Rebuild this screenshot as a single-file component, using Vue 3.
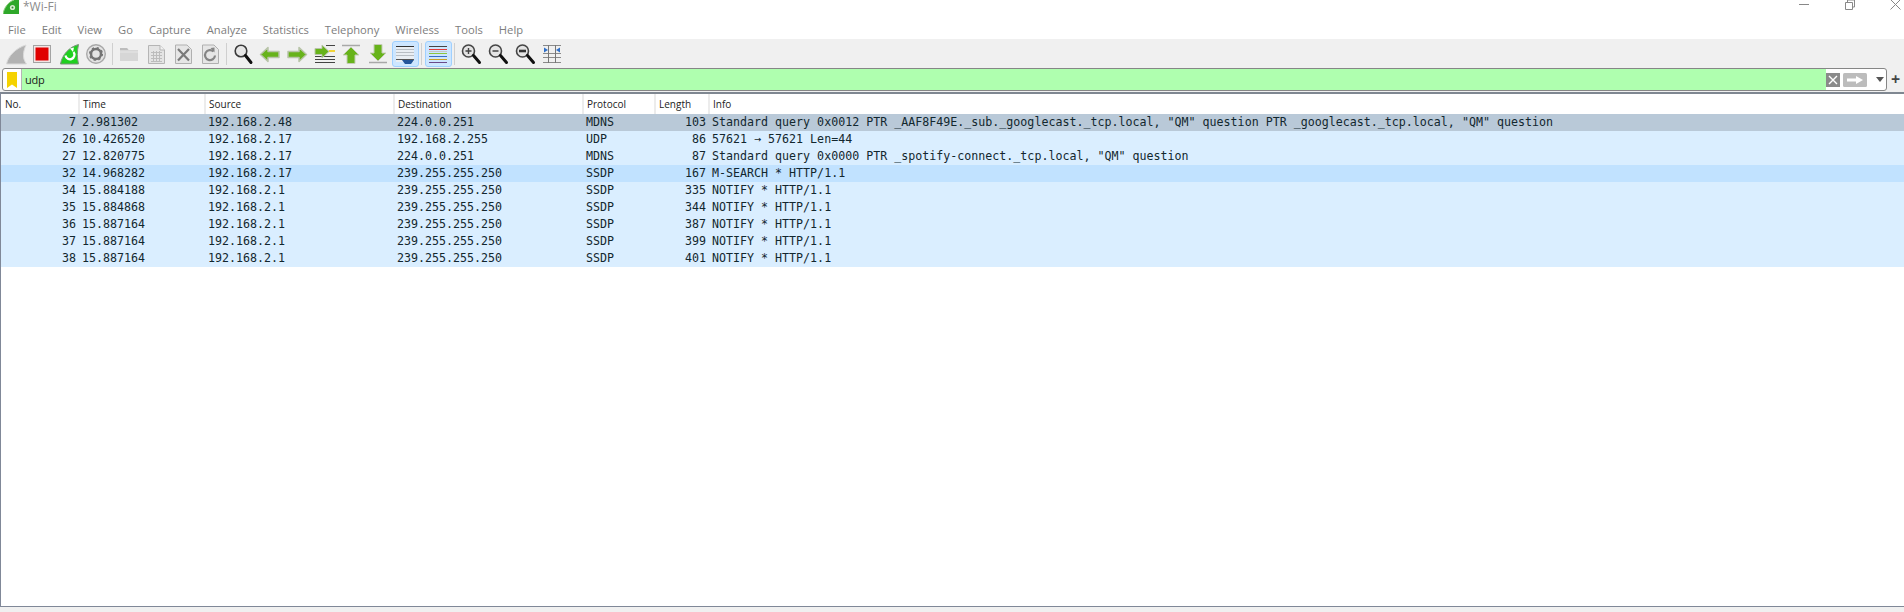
<script setup>
const menus = ['File','Edit','View','Go','Capture','Analyze','Statistics','Telephony','Wireless','Tools','Help']
const cols = [
  { name: 'No.', w: 79 },
  { name: 'Time', w: 126 },
  { name: 'Source', w: 189 },
  { name: 'Destination', w: 189 },
  { name: 'Protocol', w: 72 },
  { name: 'Length', w: 54 },
  { name: 'Info', w: 0 }
]
const rows = [
  ['7','2.981302','192.168.2.48','224.0.0.251','MDNS','103','Standard query 0x0012 PTR _AAF8F49E._sub._googlecast._tcp.local, "QM" question PTR _googlecast._tcp.local, "QM" question','sel'],
  ['26','10.426520','192.168.2.17','192.168.2.255','UDP','86','57621 → 57621 Len=44',''],
  ['27','12.820775','192.168.2.17','224.0.0.251','MDNS','87','Standard query 0x0000 PTR _spotify-connect._tcp.local, "QM" question',''],
  ['32','14.968282','192.168.2.17','239.255.255.250','SSDP','167','M-SEARCH * HTTP/1.1','hi'],
  ['34','15.884188','192.168.2.1','239.255.255.250','SSDP','335','NOTIFY * HTTP/1.1',''],
  ['35','15.884868','192.168.2.1','239.255.255.250','SSDP','344','NOTIFY * HTTP/1.1',''],
  ['36','15.887164','192.168.2.1','239.255.255.250','SSDP','387','NOTIFY * HTTP/1.1',''],
  ['37','15.887164','192.168.2.1','239.255.255.250','SSDP','399','NOTIFY * HTTP/1.1',''],
  ['38','15.887164','192.168.2.1','239.255.255.250','SSDP','401','NOTIFY * HTTP/1.1','']
]
</script>

<template>
  <div class="app">
    <div class="title">
      <svg class="logo" width="16" height="14" viewBox="0 0 16 14"><path d="M0 14C1 8 5 2 11 0H16V14Z" fill="#2fa82a"/><path d="M0 14C1 8 5 2 11 0" fill="none" stroke="#8fcf7f"/><circle cx="9.500" cy="7.500" r="2.600" fill="#d8ecd0"/><circle cx="9.500" cy="7.500" r="1" fill="#3a8a34"/></svg>
      <span class="tname">*Wi-Fi</span>
      <div class="winbtns">
        <svg width="12" height="12" viewBox="0 0 12 12"><path d="M1 5.500H11" stroke="#888" fill="none"/></svg>
        <svg width="12" height="12" viewBox="0 0 12 12"><path d="M1.500 3.500H8.500V10.500H1.500ZM3.500 3V1H10.500V8H9" stroke="#888" fill="none"/></svg>
        <svg width="12" height="12" viewBox="0 0 12 12"><path d="M0.500 0.500L10.500 10.500M10.500 0.500L0.500 10.500" stroke="#888" fill="none"/></svg>
      </div>
    </div>
    <div class="menu"><span v-for="m in menus" :key="m">{{ m }}</span></div>
    <div class="toolbar">
      <div class="tb"><svg viewBox="0 0 24 24"><path d="M3.500 22C5 14 13 6 23 3C20 10 19 16 23.500 22Z" fill="#b2b2b2" stroke="#dadada"/></svg></div>
      <div class="tb"><svg viewBox="0 0 24 24"><rect x="3.500" y="3.500" width="17" height="17" fill="#f3e4e4" stroke="#a3a3a3"/><rect x="5.500" y="5.500" width="13" height="13" fill="#e00000"/></svg></div>
      <div class="tb"><svg viewBox="0 0 24 24"><path d="M3.500 22C5 13 12 5 21.500 2.500C20 9 20 16 21.500 22Z" fill="#1fd01f" stroke="#7d927d"/><path d="M8.500 13.500A4.500 4.500 0 1 0 16.500 10" fill="none" stroke="#fff" stroke-width="2.200"/><path d="M13 6.500L17 5.500L16 10Z" fill="#fff"/></svg></div>
      <div class="tb"><svg viewBox="0 0 24 24"><circle cx="12" cy="12" r="9.300" fill="#e4e4e4" stroke="#a8a8a8" stroke-width="1.400"/><circle cx="12" cy="12" r="5" fill="none" stroke="#747474" stroke-width="2.500"/><circle cx="12" cy="12" r="6.300" fill="none" stroke="#747474" stroke-width="1.500" stroke-dasharray="2.200 2.750"/></svg></div>
      <div class="sep"></div>
      <div class="tb"><svg viewBox="0 0 24 24"><path d="M3 6H10L11.500 8H21V19H3Z" fill="#d6d6d6"/><path d="M3 6H10L11.500 8H3Z" fill="#bdbdbd"/><path d="M3 10H21" stroke="#e6e6e6"/></svg></div>
      <div class="tb"><svg viewBox="0 0 24 24"><path d="M4.500 3.500H16L20.500 8V21.500H4.500Z" fill="#e4e4e4" stroke="#b5b5b5"/><path d="M16 3.500V8H20.500" fill="#f2f2f2" stroke="#b5b5b5"/><path d="M7 10.500H18M7 13.500H18M7 16.500H18M7 19.500H18M9.500 9V20M12.500 9V20M15.500 9V20" stroke="#bcbcbc" fill="none"/></svg></div>
      <div class="tb"><svg viewBox="0 0 24 24"><path d="M4.500 3H16L20.500 7.500V21.500H4.500Z" fill="#e6e6e6" stroke="#b0b0b0"/><path d="M7 7L18 18.500M18 7L7 18.500" stroke="#7a7a7a" stroke-width="2.200"/></svg></div>
      <div class="tb"><svg viewBox="0 0 24 24"><path d="M4.500 3H16L20.500 7.500V21.500H4.500Z" fill="#e6e6e6" stroke="#b0b0b0"/><path d="M15.500 9.500A5 5 0 1 0 17 13.500" fill="none" stroke="#858585" stroke-width="2.200"/><path d="M12.500 6L16.500 5.500L16.500 10.500Z" fill="#858585"/></svg></div>
      <div class="sep"></div>
      <div class="tb"><svg viewBox="0 0 24 24"><circle cx="10" cy="9" r="5.800" fill="#e6e6e6" stroke="#3a3a3a" stroke-width="1.600"/><path d="M14.500 13.500L20 20.500" stroke="#111" stroke-width="3" stroke-linecap="round"/></svg></div>
      <div class="tb"><svg viewBox="0 0 24 24"><path d="M2.500 12.500L10 5.500V9.500H21V15.500H10V19.500Z" fill="#67b31a" stroke="#b8c4a8" stroke-width="1.500" stroke-linejoin="round"/></svg></div>
      <div class="tb"><svg viewBox="0 0 24 24"><path d="M21.500 12.500L14 5.500V9.500H3V15.500H14V19.500Z" fill="#67b31a" stroke="#b8c4a8" stroke-width="1.500" stroke-linejoin="round"/></svg></div>
      <div class="tb"><svg viewBox="0 0 24 24"><path d="M14 3.500H23M3 14.500H23M3 17.500H23M3 20.500H23" stroke="#444" fill="none"/><path d="M17 9H23" stroke="#f2d43a" stroke-width="2"/><path d="M17 9.500L10 3V6.500H3V12.500H10V16Z" fill="#67b31a" stroke="#b8c4a8" stroke-linejoin="round"/></svg></div>
      <div class="tb"><svg viewBox="0 0 24 24"><path d="M3 3.500H21" stroke="#a8a8a8" stroke-width="1.500"/><path d="M12 5L20 13H16V21.500H8V13H4Z" fill="#67b31a" stroke="#c4ccb6" stroke-linejoin="round"/></svg></div>
      <div class="tb"><svg viewBox="0 0 24 24"><path d="M3 20.500H21" stroke="#a8a8a8" stroke-width="1.500"/><path d="M12 19L20 11H16V2.500H8V11H4Z" fill="#67b31a" stroke="#c4ccb6" stroke-linejoin="round"/></svg></div>
      <div class="tb on"><svg viewBox="0 0 24 24"><rect x="3" y="4" width="18" height="16" fill="#e9eef3"/><path d="M3 4.500H21" stroke="#333"/><path d="M3 7.500H21M3 10.500H21M3 13.500H21" stroke="#b8bec4"/><path d="M3 17.500H21" stroke="#555"/><path d="M9 18H21L18 22H12Z" fill="#24569a"/></svg></div>
      <div class="sep"></div>
      <div class="tb on"><svg viewBox="0 0 24 24"><path d="M3 4.500H21" stroke="#444"/><path d="M3 7.500H21" stroke="#e03b3b"/><path d="M3 9.500H21" stroke="#c8c8c8"/><path d="M3 11.500H21" stroke="#8cc63f"/><path d="M3 14.500H21" stroke="#3a6fc4"/><path d="M3 17.500H21" stroke="#c9a227"/><path d="M3 20.500H21" stroke="#6a4a8a"/></svg></div>
      <div class="sep"></div>
      <div class="tb"><svg viewBox="0 0 24 24"><circle cx="9.500" cy="9" r="6" fill="#e4e4e4" stroke="#454545" stroke-width="1.600"/><path d="M6.500 9H12.500M9.500 6V12" stroke="#444" stroke-width="1.400"/><path d="M14.500 13.500L20.500 20.500" stroke="#111" stroke-width="3" stroke-linecap="round"/></svg></div>
      <div class="tb"><svg viewBox="0 0 24 24"><circle cx="9.500" cy="9" r="6" fill="#e4e4e4" stroke="#454545" stroke-width="1.600"/><path d="M6.500 9H12.500" stroke="#444" stroke-width="1.500"/><path d="M14.500 13.500L20.500 20.500" stroke="#111" stroke-width="3" stroke-linecap="round"/></svg></div>
      <div class="tb"><svg viewBox="0 0 24 24"><circle cx="9.500" cy="9" r="6" fill="#e4e4e4" stroke="#454545" stroke-width="1.600"/><path d="M6 9H13" stroke="#333" stroke-width="2.600"/><path d="M14.500 13.500L20.500 20.500" stroke="#111" stroke-width="3" stroke-linecap="round"/></svg></div>
      <div class="tb"><svg viewBox="0 0 24 24"><path d="M3 3.500H21M3 20.500H21M3 11.500H21M3 15.500H21" stroke="#8a8a8a" fill="none"/><path d="M8.500 3V21M15.500 3V21" stroke="#777" fill="none"/><path d="M4 5.500L8 8L4 10.500Z" fill="#2f6fc8"/><path d="M20 5.500L16 8L20 10.500Z" fill="#2f6fc8"/></svg></div>
    </div>
    <div class="filter">
      <div class="field">
        <div class="fbox"><svg width="10" height="16" viewBox="0 0 10 16"><path d="M0 0H10V16L5 12.500L0 16Z" fill="#f5d200"/></svg></div>
        <div class="finput">udp</div>
        <div class="fbtns">
          <svg width="14" height="14" viewBox="0 0 14 14"><rect width="14" height="14" fill="#8a8a8a"/><path d="M3 3L11 11M11 3L3 11" stroke="#fff" stroke-width="1.400"/></svg>
          <svg width="24" height="14" viewBox="0 0 24 14"><rect width="24" height="14" rx="1.500" fill="#bcbcbc"/><path d="M4 5.500H13V3L20 7L13 11V8.500H4Z" fill="#fff"/></svg>
          <svg class="drop" width="8" height="5" viewBox="0 0 8 5"><path d="M0 0H8L4 5Z" fill="#555"/></svg>
        </div>
      </div>
      <div class="plus">+</div>
    </div>
    <div class="packets">
      <div class="head"><div v-for="c in cols" :key="c.name" class="hc" :style="c.w ? { width: c.w + 'px' } : { flex: 1 }">{{ c.name }}</div></div>
      <div v-for="r in rows" :key="r[0]" class="row" :class="r[7]">
        <div class="c no">{{ r[0] }}</div><div class="c time">{{ r[1] }}</div><div class="c src">{{ r[2] }}</div><div class="c dst">{{ r[3] }}</div><div class="c proto">{{ r[4] }}</div><div class="c len">{{ r[5] }}</div><div class="c info">{{ r[6] }}</div>
      </div>
    </div>
  </div>
</template>

<style>
html, body { margin: 0; background: #f0f0f0; overflow: hidden; }
</style>
<style scoped>
.app { width: 1904px; height: 612px; display: flex; flex-direction: column; font-family: "Open Sans", sans-serif; background: #f0f0f0; }
.title { height: 14px; background: #fff; display: flex; align-items: flex-start; font-size: 12px; color: #8c8c8c; padding-left: 3px; }
.logo { flex: none; }
.tname { margin-left: 4px; line-height: 14px; }
.winbtns { margin-left: auto; margin-top: -1px; display: flex; gap: 34px; padding-right: 2px; }
.menu { height: 24px; box-sizing: border-box; padding: 6px 0 0 8px; background: #fff; display: flex; gap: 16px; align-items: center; font-size: 11.2px; color: #7d7d7d; }
.toolbar { height: 30px; box-sizing: border-box; border-top: 1px solid #fff; display: flex; align-items: center; padding-left: 1.500px; }
.tb { width: 27px; height: 26px; box-sizing: border-box; display: flex; align-items: center; justify-content: center; flex: none; border: 1px solid transparent; border-radius: 3px; }
.tb svg { width: 24px; height: 24px; }
.tb.on { background: #cde6ff; border-color: #9fd0ff; }
.sep { width: 1px; height: 22px; margin: 0 2.500px; background: #cfcfcf; flex: none; }
.filter { height: 23px; display: flex; align-items: stretch; padding-left: 2px; }
.field { width: 1885px; box-sizing: border-box; display: flex; border: 1px solid #868686; border-radius: 3px; background: #fff; }
.fbox { width: 18px; flex: none; display: flex; align-items: center; justify-content: center; border-right: 1px solid #b5b5b5; }
.finput { flex: 1; background: #afffaf; font-size: 11px; letter-spacing: -0.3px; line-height: 21px; padding-left: 3px; color: #1a1a1a; }
.fbtns { width: 60px; flex: none; display: flex; align-items: center; gap: 3px; }
.drop { margin-left: 6px; }
.plus { flex: 1; text-align: center; font-size: 16px; font-weight: 700; line-height: 23px; color: #444; }
.packets { flex: 1; margin: 1px 0 5px; border-top: 2px solid #7f8791; border-left: 1px solid #808898; border-bottom: 1px solid #808898; background: #fff; font-family: "DejaVu Sans Mono", monospace; font-size: 11.65px; }
.head { height: 20px; display: flex; font-family: "Open Sans", sans-serif; font-size: 10px; color: #222; }
.hc { padding-left: 3px; line-height: 20px; box-sizing: border-box; border-right: 2px solid #ececec; }
.hc:first-child { padding-left: 4px; }
.hc:last-child { border-right: 0; }
.row { height: 17px; line-height: 17px; display: flex; background: #daeeff; color: #12272e; white-space: pre; }
.row.sel { background: #b9c9d8; }
.row.hi { background: #c1e2ff; }
.c { box-sizing: border-box; padding: 0 3px; overflow: hidden; }
.no { width: 78px; text-align: right; }
.time { width: 126px; }
.src { width: 189px; }
.dst { width: 189px; }
.proto { width: 72px; }
.len { width: 54px; text-align: right; }
.info { flex: 1; }
</style>
